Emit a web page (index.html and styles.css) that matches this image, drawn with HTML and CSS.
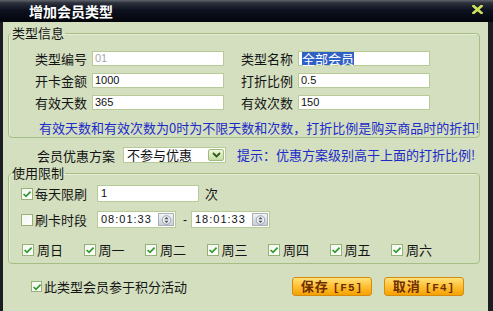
FILE: index.html
```html
<!DOCTYPE html>
<html>
<head>
<meta charset="utf-8">
<link rel="stylesheet" href="styles.css">
</head>
<body>
<div class="window">
  <div class="titlebar">
    <span class="title">增加会员类型</span>
    <svg class="close" width="11" height="9" viewBox="0 0 11 9"><path d="M1.5 1 L9.5 8 M9.5 1 L1.5 8" stroke="#cde35c" stroke-width="2.6" stroke-linecap="square"/></svg>
  </div>
  <div class="body">
    <fieldset class="group g1">
      <legend>类型信息</legend>
      <div class="grid">
        <span class="lbl">类型编号</span><div class="input dis">01</div>
        <span class="lbl">类型名称</span><div class="input"><span class="sel">全部会员</span></div>
        <span class="lbl">开卡金额</span><div class="input">1000</div>
        <span class="lbl">打折比例</span><div class="input">0.5</div>
        <span class="lbl">有效天数</span><div class="input">365</div>
        <span class="lbl">有效次数</span><div class="input">150</div>
      </div>
      <div class="note">有效天数和有效次数为0时为不限天数和次数，打折比例是购买商品时的折扣!</div>
    </fieldset>

    <div class="plan">
      <span class="plan-lbl">会员优惠方案</span>
      <div class="select">
        <span class="select-text">不参与优惠</span>
        <span class="select-btn"><svg width="9" height="6" viewBox="0 0 9 6"><path d="M1 1 L4.5 4.5 L8 1" fill="none" stroke="#2c5a18" stroke-width="1.8"/></svg></span>
      </div>
      <span class="hint">提示：优惠方案级别高于上面的打折比例!</span>
    </div>

    <fieldset class="group g2">
      <legend>使用限制</legend>
      <div class="row r1">
        <span class="cb on"><svg width="12" height="12" viewBox="0 0 12 12"><path d="M2.6 6 L5 8.4 L9.6 3.6" fill="none" stroke="#2e9a2e" stroke-width="1.7"/></svg></span>
        <span class="cb-lbl">每天限刷</span>
        <div class="input wide">1</div>
        <span class="unit">次</span>
      </div>
      <div class="row r2">
        <span class="cb"></span>
        <span class="cb-lbl">刷卡时段</span>
        <div class="input time"><span class="time-text">08:01:33</span><span class="spin"><svg width="13" height="10" viewBox="0 0 13 10"><circle cx="6.5" cy="5" r="4.3" fill="#eef0f4" stroke="#8b929c" stroke-width="0.8"/><path d="M4.3 4.2 L6.5 2 L8.7 4.2 Z M4.3 5.8 L6.5 8 L8.7 5.8 Z" fill="#4a525c"/></svg></span></div>
        <span class="dash">-</span>
        <div class="input time"><span class="time-text">18:01:33</span><span class="spin"><svg width="13" height="10" viewBox="0 0 13 10"><circle cx="6.5" cy="5" r="4.3" fill="#eef0f4" stroke="#8b929c" stroke-width="0.8"/><path d="M4.3 4.2 L6.5 2 L8.7 4.2 Z M4.3 5.8 L6.5 8 L8.7 5.8 Z" fill="#4a525c"/></svg></span></div>
      </div>
      <div class="row days">
        <div class="day"><span class="cb on"><svg width="12" height="12" viewBox="0 0 12 12"><path d="M2.6 6 L5 8.4 L9.6 3.6" fill="none" stroke="#2e9a2e" stroke-width="1.7"/></svg></span><span class="day-lbl">周日</span></div>
        <div class="day"><span class="cb on"><svg width="12" height="12" viewBox="0 0 12 12"><path d="M2.6 6 L5 8.4 L9.6 3.6" fill="none" stroke="#2e9a2e" stroke-width="1.7"/></svg></span><span class="day-lbl">周一</span></div>
        <div class="day"><span class="cb on"><svg width="12" height="12" viewBox="0 0 12 12"><path d="M2.6 6 L5 8.4 L9.6 3.6" fill="none" stroke="#2e9a2e" stroke-width="1.7"/></svg></span><span class="day-lbl">周二</span></div>
        <div class="day"><span class="cb on"><svg width="12" height="12" viewBox="0 0 12 12"><path d="M2.6 6 L5 8.4 L9.6 3.6" fill="none" stroke="#2e9a2e" stroke-width="1.7"/></svg></span><span class="day-lbl">周三</span></div>
        <div class="day"><span class="cb on"><svg width="12" height="12" viewBox="0 0 12 12"><path d="M2.6 6 L5 8.4 L9.6 3.6" fill="none" stroke="#2e9a2e" stroke-width="1.7"/></svg></span><span class="day-lbl">周四</span></div>
        <div class="day"><span class="cb on"><svg width="12" height="12" viewBox="0 0 12 12"><path d="M2.6 6 L5 8.4 L9.6 3.6" fill="none" stroke="#2e9a2e" stroke-width="1.7"/></svg></span><span class="day-lbl">周五</span></div>
        <div class="day"><span class="cb on"><svg width="12" height="12" viewBox="0 0 12 12"><path d="M2.6 6 L5 8.4 L9.6 3.6" fill="none" stroke="#2e9a2e" stroke-width="1.7"/></svg></span><span class="day-lbl">周六</span></div>
      </div>
    </fieldset>

    <div class="footer">
      <span class="cb on"><svg width="12" height="12" viewBox="0 0 12 12"><path d="M2.6 6 L5 8.4 L9.6 3.6" fill="none" stroke="#2e9a2e" stroke-width="1.7"/></svg></span>
      <span class="foot-lbl">此类型会员参于积分活动</span>
      <div class="buttons">
        <button class="btn">保存 <span class="key">[F5]</span></button>
        <button class="btn">取消 <span class="key">[F4]</span></button>
      </div>
    </div>
  </div>
</div>
</body>
</html>
```

FILE: styles.css
```css
html, body {
  margin: 0;
  padding: 0;
  background: #d3dfbf;
}
.window {
  width: 493px;
  height: 311px;
  overflow: hidden;
  display: flex;
  flex-direction: column;
  font-family: "Noto Sans CJK SC", "Noto Sans", sans-serif;
  font-size: 13px;
  color: #141414;
}
.titlebar {
  height: 22px;
  flex: none;
  display: flex;
  align-items: center;
  justify-content: space-between;
  padding: 0 10px 0 29px;
  background: linear-gradient(to bottom, #60646c 0, #2c303a 3px, #0e1220 10px, #03040a 22px);
}
.title {
  color: #ffffff;
  font-weight: bold;
  font-size: 14px;
  line-height: 16px;
  margin-top: -1px;
}
.close {
  display: block;
  margin-top: -3px;
}
.body {
  flex: 1;
  background: #d3dfbf;
  border-left: 3px solid #1b1d22;
  border-right: 5px solid #1b1d22;
  padding: 0 8px 0 5px;
}
.group {
  margin: 4px 0 0;
  padding: 0;
  border: 1px solid #a7bd86;
  border-radius: 4px;
  min-width: 0;
  box-shadow: inset 1px 1px 0 #e6eed8;
}
.group legend {
  margin-left: 2px;
  padding: 0 1px;
  font-size: 13px;
  line-height: 14px;
}
.g1 {
  padding-bottom: 2px;
}
.grid {
  margin-top: 11px;
  display: grid;
  grid-template-columns: 78px 132px 64px 132px;
  grid-auto-rows: 15px;
  column-gap: 5px;
  row-gap: 7px;
}
.lbl {
  text-align: right;
  line-height: 15px;
  white-space: nowrap;
}
.input {
  box-sizing: border-box;
  background: #ffffff;
  border: 1px solid #b6cb98;
  font-family: "Liberation Sans", Arial, sans-serif;
  font-size: 11px;
  line-height: 13px;
  padding-left: 2px;
  color: #111;
  white-space: nowrap;
  display: flex;
  align-items: center;
}
.input.dis {
  color: #a8a8a8;
}
.sel {
  display: block;
  margin-left: 1px;
  background: #2f60c6;
  color: #ffffff;
  font-family: "Noto Sans CJK SC", sans-serif;
  font-size: 13px;
  line-height: 13px;
  height: 13px;
}
.note {
  margin-top: 11px;
  padding-left: 30px;
  line-height: 14px;
  color: #1d2bc8;
  white-space: nowrap;
}
.plan {
  margin-top: 9px;
  height: 16px;
  display: flex;
  align-items: center;
  padding-left: 29px;
}
.plan-lbl {
  width: 86px;
  white-space: nowrap;
}
.select {
  box-sizing: border-box;
  width: 103px;
  height: 16px;
  background: #fff;
  border: 1px solid #b6cb98;
  display: flex;
  align-items: center;
  justify-content: space-between;
  padding: 0 1px 0 3px;
}
.select-text {
  line-height: 14px;
  white-space: nowrap;
}
.select-btn {
  box-sizing: border-box;
  width: 16px;
  height: 12px;
  border: 1px solid #9fbb7c;
  border-radius: 2px;
  background: linear-gradient(to bottom, #eef6dc, #c6dca4);
  display: flex;
  align-items: center;
  justify-content: center;
}
.select-btn svg { display: block; }
.hint {
  margin-left: 11px;
  color: #1d2bc8;
  white-space: nowrap;
  line-height: 14px;
}
.g2 {
  margin-top: 3px;
  padding: 0 0 5px;
}
.row {
  display: flex;
  align-items: center;
  height: 17px;
}
.r1 {
  margin-top: 5px;
  padding-left: 12px;
}
.r2 {
  margin-top: 9px;
  padding-left: 12px;
}
.days {
  margin-top: 13px;
  padding-left: 13px;
}
.cb {
  box-sizing: border-box;
  width: 12px;
  height: 12px;
  flex: none;
  border: 1px solid #93b273;
  background: linear-gradient(to bottom right, #f4f6f0, #ffffff);
  display: block;
}
.cb svg {
  display: block;
  margin: -1px;
}
.cb-lbl {
  margin-left: 2px;
  width: 62px;
  white-space: nowrap;
}
.wide {
  width: 102px;
  height: 17px;
  line-height: 15px;
  font-size: 11px;
  padding-left: 3px;
}
.unit {
  margin-left: 6px;
}
.time {
  width: 79px;
  height: 17px;
  justify-content: space-between;
  padding: 0 1px 0 3px;
}
.time-text {
  letter-spacing: 1px;
  font-size: 11px;
  line-height: 15px;
}
.spin {
  box-sizing: border-box;
  width: 16px;
  height: 13px;
  border: 1px solid #a8b0b8;
  background: linear-gradient(to bottom, #f2f4f6, #c9ced6);
  display: flex;
  align-items: center;
  justify-content: center;
}
.spin svg { display: block; }
.dash {
  margin: 0 4px 0 7px;
  font-family: "Liberation Sans", sans-serif;
  font-size: 12px;
}
.day {
  width: 61.5px;
  flex: none;
  display: flex;
  align-items: center;
}
.day-lbl {
  margin-left: 3px;
  white-space: nowrap;
}
.footer {
  margin-top: 13px;
  height: 19px;
  display: flex;
  align-items: center;
  padding-left: 23px;
  padding-right: 16px;
}
.footer .cb {
  width: 11px;
  height: 11px;
}
.foot-lbl {
  margin-left: 2px;
  white-space: nowrap;
}
.buttons {
  margin-left: auto;
  display: flex;
  gap: 12px;
}
.btn {
  box-sizing: border-box;
  width: 80px;
  height: 19px;
  padding: 0;
  border: 1px solid #d58a10;
  border-radius: 3px;
  background: linear-gradient(to bottom, #ffe27a 0, #ffc23a 45%, #f5a200 100%);
  color: #6e2e00;
  font-family: "Noto Sans CJK SC", sans-serif;
  font-size: 13px;
  line-height: 16px;
  font-weight: bold;
  letter-spacing: 1px;
  white-space: nowrap;
}
.key {
  font-family: "Liberation Mono", monospace;
  font-size: 11px;
  font-weight: bold;
}
```
